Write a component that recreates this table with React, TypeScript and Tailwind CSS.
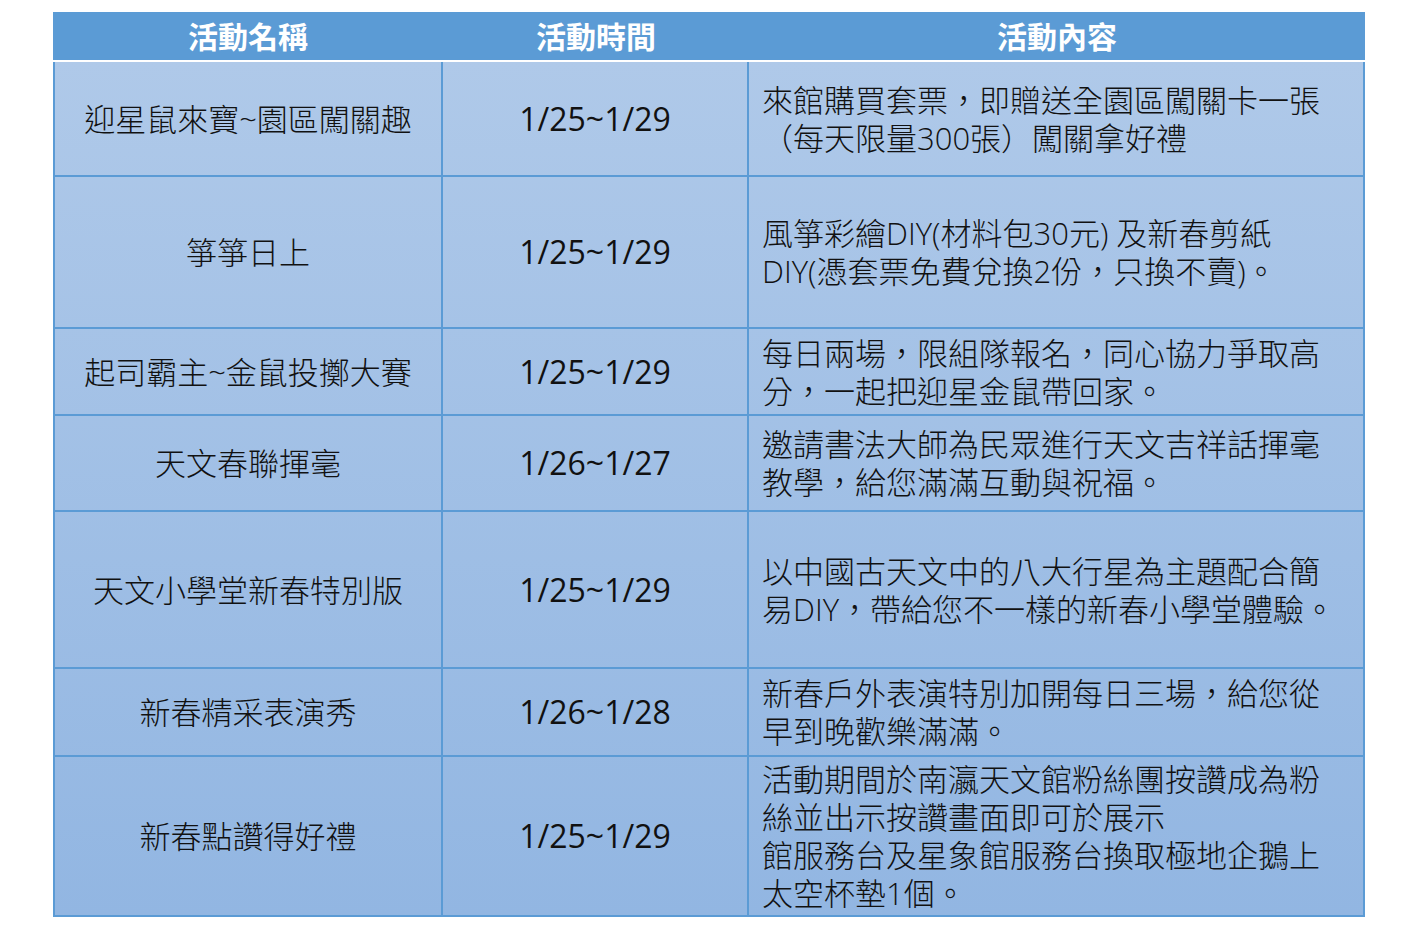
import React from 'react';

const font = { fontFamily: '"Open Sans", "Noto Sans CJK TC", "Noto Sans", sans-serif' };

interface Row {
  name: string;
  date: string;
  lines: string[];
  h: string;
}

const rows: Row[] = [
  {
    name: '迎星鼠來寶~園區闖關趣',
    date: '1/25~1/29',
    lines: ['來館購買套票，即贈送全園區闖關卡一張', '（每天限量300張）闖關拿好禮'],
    h: 'h-[113px]',
  },
  {
    name: '箏箏日上',
    date: '1/25~1/29',
    lines: ['風箏彩繪DIY(材料包30元) 及新春剪紙', 'DIY(憑套票免費兌換2份，只換不賣)。'],
    h: 'h-[152px]',
  },
  {
    name: '起司霸主~金鼠投擲大賽',
    date: '1/25~1/29',
    lines: ['每日兩場，限組隊報名，同心協力爭取高', '分，一起把迎星金鼠帶回家。'],
    h: 'h-[87px]',
  },
  {
    name: '天文春聯揮毫',
    date: '1/26~1/27',
    lines: ['邀請書法大師為民眾進行天文吉祥話揮毫', '教學，給您滿滿互動與祝福。'],
    h: 'h-[96px]',
  },
  {
    name: '天文小學堂新春特別版',
    date: '1/25~1/29',
    lines: ['以中國古天文中的八大行星為主題配合簡', '易DIY，帶給您不一樣的新春小學堂體驗。'],
    h: 'h-[157px]',
  },
  {
    name: '新春精采表演秀',
    date: '1/26~1/28',
    lines: ['新春戶外表演特別加開每日三場，給您從', '早到晚歡樂滿滿。'],
    h: 'h-[88px]',
  },
  {
    name: '新春點讚得好禮',
    date: '1/25~1/29',
    lines: [
      '活動期間於南瀛天文館粉絲團按讚成為粉',
      '絲並出示按讚畫面即可於展示',
      '館服務台及星象館服務台換取極地企鵝上',
      '太空杯墊1個。',
    ],
    h: 'h-[160px]',
  },
];

export default function App() {
  return (
    <div className="w-[1418px] h-[930px] bg-white pt-[12px] pl-[53px]" style={font}>
      <div className="w-[1312px]">
        {/* header */}
        <div className="grid grid-cols-[390px_306px_616px] h-[50px] bg-[#5b9bd5] border-b-2 border-white text-white font-bold text-[30px]">
          <div className="flex items-center justify-center pt-[1px]">活動名稱</div>
          <div className="flex items-center justify-center pt-[1px]">活動時間</div>
          <div className="flex items-center justify-center pt-[1px]">活動內容</div>
        </div>

        {/* body */}
        <div className="border-2 border-t-0 border-[#5b9bd5] bg-gradient-to-b from-[#afc9e9] to-[#92b6e2] text-[#111111] font-light">
          {rows.map((r, i) => (
            <div
              key={i}
              className={`grid grid-cols-[388px_306px_614px] ${r.h} ${i > 0 ? 'border-t-2 border-[#5b9bd5]' : ''}`}
            >
              <div className="flex items-center justify-center border-r-2 border-[#5b9bd5] text-[31px] leading-[38px] whitespace-nowrap">
                {r.name}
              </div>
              <div className="flex items-center justify-center border-r-2 border-[#5b9bd5] text-[32px] font-normal leading-[38px] whitespace-nowrap">
                {r.date}
              </div>
              <div className="flex flex-col justify-center pl-[13px] text-[31px] leading-[38px] whitespace-nowrap">
                {r.lines.map((l, j) => (
                  <div key={j}>{l}</div>
                ))}
              </div>
            </div>
          ))}
        </div>
      </div>
    </div>
  );
}
